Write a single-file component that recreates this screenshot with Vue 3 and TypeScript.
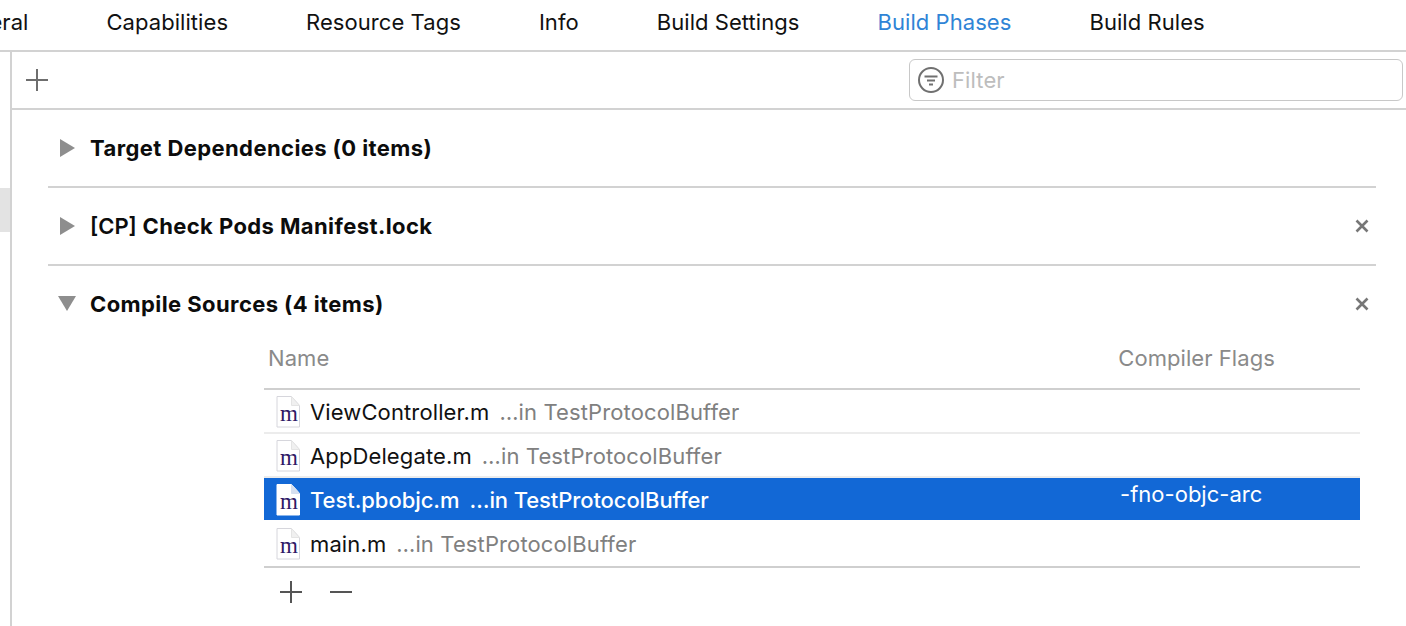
<script setup lang="ts">
const tabs = ['General', 'Capabilities', 'Resource Tags', 'Info', 'Build Settings', 'Build Phases', 'Build Rules']
const files = [
  { name: 'ViewController.m', flags: '', selected: false },
  { name: 'AppDelegate.m', flags: '', selected: false },
  { name: 'Test.pbobjc.m', flags: '-fno-objc-arc', selected: true },
  { name: 'main.m', flags: '', selected: false },
]
</script>

<template>
  <div class="page">
    <nav class="tabs">
      <span v-for="t in tabs" :key="t" class="tab" :class="{ active: t === 'Build Phases' }">{{ t }}</span>
    </nav>
    <div class="body">
      <aside class="side"><div class="side-sel"></div></aside>
      <main class="main">
        <div class="toolbar">
          <svg class="plus" width="22" height="22" viewBox="0 0 22 22"><path d="M0 11H22M11 0V22" stroke="#6e6e6e" stroke-width="2" /></svg>
          <div class="filter">
            <svg width="28" height="28" viewBox="0 0 28 28">
              <circle cx="14" cy="14" r="12" fill="none" stroke="#707070" stroke-width="2" />
              <path d="M7.5 10.5H20.5M10 14.5H18M12 18.5H16" stroke="#707070" stroke-width="2" />
            </svg>
            <span class="filter-text">Filter</span>
          </div>
        </div>

        <section class="phase">
          <div class="phase-head">
            <svg class="tri" width="16" height="18" viewBox="0 0 16 18"><path d="M0 0L15 9L0 18Z" fill="#8e8e8e" /></svg>
            <span class="phase-title">Target Dependencies (0 items)</span>
          </div>
        </section>

        <section class="phase">
          <div class="phase-head">
            <svg class="tri" width="16" height="18" viewBox="0 0 16 18"><path d="M0 0L15 9L0 18Z" fill="#8e8e8e" /></svg>
            <span class="phase-title"><span class="cp">[CP]</span> Check Pods Manifest.lock</span>
            <svg class="close" width="14" height="14" viewBox="0 0 14 14"><path d="M1.5 1.5L12.5 12.5M12.5 1.5L1.5 12.5" stroke="#777" stroke-width="2.6" /></svg>
          </div>
        </section>

        <section class="phase open">
          <div class="phase-head">
            <svg class="tri down" width="18" height="16" viewBox="0 0 18 16"><path d="M0 0H18L9 15Z" fill="#8e8e8e" /></svg>
            <span class="phase-title">Compile Sources (4 items)</span>
            <svg class="close" width="14" height="14" viewBox="0 0 14 14"><path d="M1.5 1.5L12.5 12.5M12.5 1.5L1.5 12.5" stroke="#777" stroke-width="2.6" /></svg>
          </div>
          <div class="table">
            <div class="thead">
              <span class="col-name">Name</span>
              <span class="col-flags">Compiler Flags</span>
            </div>
            <div v-for="f in files" :key="f.name" class="row" :class="{ selected: f.selected }">
              <svg class="file" width="26" height="32" viewBox="0 0 26 32">
                <path d="M2 0.5H16.5L24.5 9.5V31H2Z" fill="#ffffff" :stroke="f.selected ? '#ffffff' : '#d6d6dc'" stroke-width="1" />
                <path d="M16.5 0.5V9.5H24.5Z" :fill="f.selected ? '#d5dff0' : '#f0f0f0'" :stroke="f.selected ? '#d5dff0' : '#e4e4e4'" stroke-width="1" />
                <text x="14" y="25" text-anchor="middle" class="file-m">m</text>
              </svg>
              <span class="fname">{{ f.name }}</span>
              <span class="fin">…in TestProtocolBuffer</span>
              <span v-if="f.flags" class="fflags">{{ f.flags }}</span>
            </div>
            <div class="tfoot">
              <svg width="22" height="22" viewBox="0 0 22 22"><path d="M0 11H22M11 0V22" stroke="#555" stroke-width="2" /></svg>
              <svg width="22" height="22" viewBox="0 0 22 22"><path d="M0 11H22" stroke="#555" stroke-width="2" /></svg>
            </div>
          </div>
        </section>
      </main>
    </div>
  </div>
</template>

<style scoped>
.page {
  width: 1406px;
  height: 626px;
  overflow: hidden;
  background: #fff;
  font-family: Inter, "Liberation Sans", sans-serif;
  font-size: 22px;
  letter-spacing: 0.12px;
  color: #111;
}
.tabs {
  display: flex;
  align-items: center;
  gap: 78px;
  height: 50px;
  margin-left: -53px;
  padding-bottom: 7px;
  box-sizing: border-box;
  white-space: nowrap;
  letter-spacing: 0.06px;
}
.tab.active { color: #2f84d6; }
.body {
  display: flex;
  border-top: 2px solid #d2d2d2;
  height: 574px;
}
.side {
  width: 10px;
  flex: none;
  border-right: 2px solid #d2d2d2;
}
.side-sel {
  margin-top: 136px;
  height: 44px;
  background: #e3e3e3;
}
.main { flex: 1; min-width: 0; }
.toolbar {
  height: 56px;
  border-bottom: 2px solid #d2d2d2;
  display: flex;
  align-items: center;
  justify-content: space-between;
  padding: 0 3px 0 14px;
}
.filter {
  width: 494px;
  height: 42px;
  box-sizing: border-box;
  border: 1.5px solid #c8c8c8;
  border-radius: 6px;
  display: flex;
  align-items: center;
  gap: 7px;
  padding-left: 7px;
}
.filter-text { color: #bdbdbd; }
.phase {
  margin: 0 30px 0 36px;
  height: 78px;
  box-sizing: border-box;
  border-bottom: 2px solid #d2d2d2;
}
.phase.open { height: auto; border-bottom: 0; }
.phase-head {
  height: 76px;
  display: flex;
  align-items: center;
}
.tri { margin-left: 12px; margin-right: 14px; flex: none; }
.tri.down { margin-left: 10px; margin-right: 14px; }
.phase-title { font-weight: 700; color: #0c0c0c; letter-spacing: 0.41px; }
.cp { font-weight: 600; letter-spacing: 0; }
.close { margin-left: auto; margin-right: 7px; }
.table { margin: 0 16px 0 216px; }
.thead {
  height: 46px;
  border-bottom: 2px solid #cfcfcf;
  display: flex;
  color: #8a8a8a;
  line-height: 33px;
  letter-spacing: 0.06px;
}
.col-name { margin-left: 4px; }
.col-flags { margin-left: 789px; }
.row {
  height: 44px;
  box-sizing: border-box;
  border-bottom: 2px solid #ececec;
  display: flex;
  align-items: center;
  position: relative;
  padding-left: 11px;
}
.row:nth-last-child(2) { border-bottom: 2px solid #cfcfcf; height: 46px; padding-bottom: 2px; }
.row.selected {
  background: #1268d6;
  background-clip: padding-box;
  border-bottom-color: transparent;
  color: #fff;
}
.file { flex: none; margin-right: 9px; margin-top: 1px; }
.file-m {
  font-family: "Liberation Serif", serif;
  font-size: 23px;
  fill: #2f1a66;
}
.fname { margin-right: 10px; padding-top: 1px; }
.fin { color: #808080; padding-top: 1px; }
.selected .fin { color: #fff; font-weight: 500; letter-spacing: -0.1px; }
.selected .fname { font-weight: 500; letter-spacing: -0.05px; }
.fflags {
  position: absolute;
  left: 856px;
  top: 3px;
  letter-spacing: 0.02px;
}
.tfoot {
  display: flex;
  gap: 28px;
  padding: 13px 0 0 16px;
}
</style>
